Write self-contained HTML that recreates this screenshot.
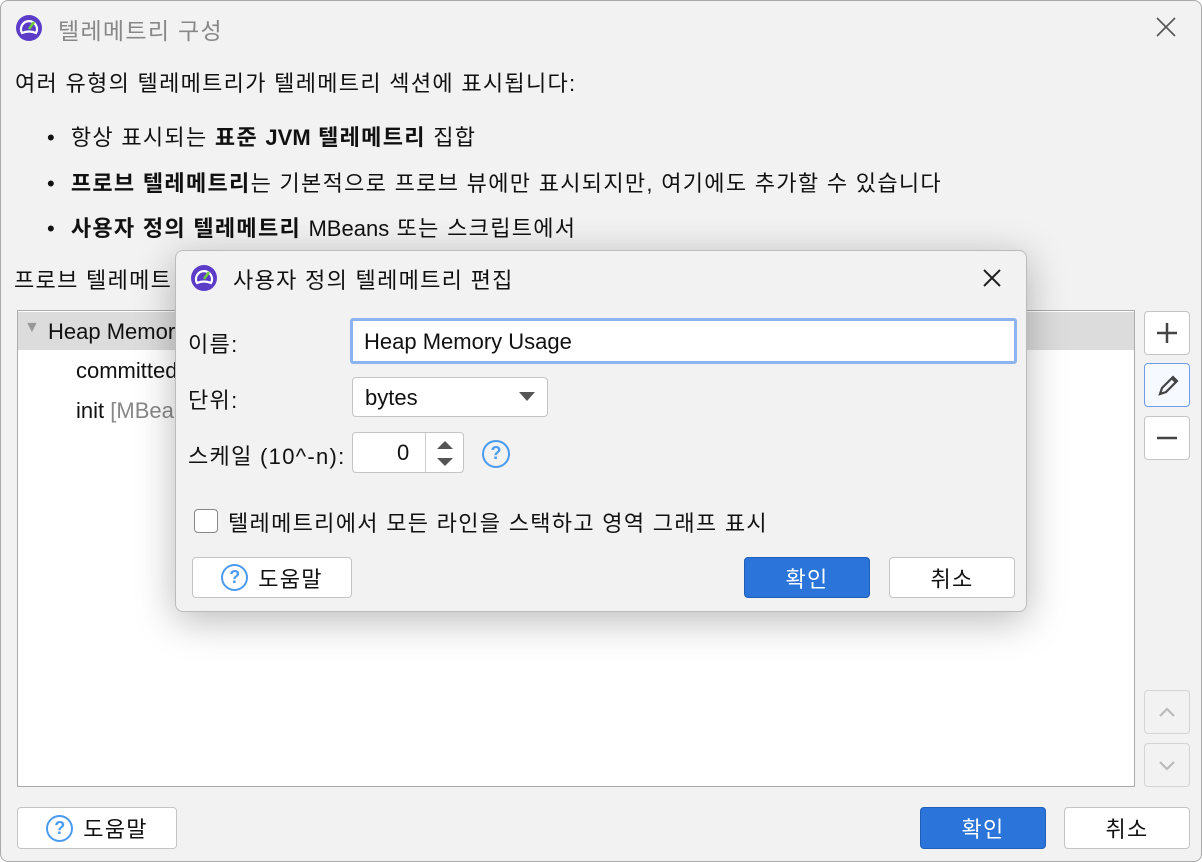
<!DOCTYPE html>
<html><head><meta charset="utf-8"><style>
*{box-sizing:border-box;margin:0;padding:0}
body{width:1202px;height:862px;background:#fff;font-family:"Liberation Sans","Noto Sans CJK KR",sans-serif;font-size:22px;color:#111;position:relative;overflow:hidden}
.win{position:absolute;left:0;top:0;width:1202px;height:862px;background:#f2f2f2;border:1px solid #aaa;border-radius:8px}
.a{position:absolute;white-space:nowrap}
.k{letter-spacing:1.3px}
.btn{position:absolute;background:#fff;border:1px solid #c4c4c4;border-radius:4px;display:flex;align-items:center;justify-content:center;font-size:22px;letter-spacing:1.3px}
.ok{background:#2b74d9;border-color:#1f5fb8;color:#fff}
.q{display:inline-block;width:27px;height:27px;border:2.5px solid #4b9bf0;border-radius:50%;color:#4b9bf0;font-size:18px;font-weight:bold;text-align:center;line-height:22px;margin-right:10px;letter-spacing:0}
.side{position:absolute;left:1143px;width:46px;height:44px;background:#fff;border:1px solid #c4c4c4;border-radius:4px}
.dlg{position:absolute;left:175px;top:250px;width:852px;height:362px;background:#f2f2f2;border:1px solid #bbb;border-radius:8px;box-shadow:0 8px 40px rgba(0,0,0,.28)}
</style></head><body>
<div class="win">
<svg class="a" style="left:14px;top:13px" width="28" height="28" viewBox="0 0 28 28"><circle cx="14" cy="14" r="13" fill="#5a3cc8"/><path d="M7 19 A8 8 0 1 1 21 19 Q14 16 7 19Z" fill="none" stroke="#fff" stroke-width="2.2"/><path d="M14 15 L19 8" stroke="#6fcf3a" stroke-width="2.5"/></svg>
<div class="a k" style="left:57px;top:11px;color:#888;font-size:23px">텔레메트리 구성</div>
<svg class="a" style="left:1154px;top:15px" width="22" height="22"><path d="M2 2L20 20M20 2L2 20" stroke="#555" stroke-width="1.6"/></svg>
<div class="a k" style="left:14px;top:65px">여러 유형의 텔레메트리가 텔레메트리 섹션에 표시됩니다:</div>
<div class="a k" style="left:46px;top:119px">•&nbsp;&nbsp;항상 표시되는 <b>표준 <span style="letter-spacing:0">JVM</span> 텔레메트리</b> 집합</div>
<div class="a k" style="left:46px;top:165px">•&nbsp;&nbsp;<b>프로브 텔레메트리</b>는 기본적으로 프로브 뷰에만 표시되지만, 여기에도 추가할 수 있습니다</div>
<div class="a k" style="left:46px;top:210px">•&nbsp;&nbsp;<b>사용자 정의 텔레메트리</b> <span style="letter-spacing:0">MBeans</span> 또는 스크립트에서</div>
<div class="a k" style="left:13px;top:262px">프로브 텔레메트</div>
<div class="a" style="left:16px;top:309px;width:1118px;height:477px;background:#fff;border:1px solid #aaa">
 <div class="a" style="left:0;top:1px;width:1116px;height:38px;background:#dcdcdc"></div>
 <div class="a" style="left:6px;top:8px;color:#999;font-size:16px">▼</div>
 <div class="a" style="left:30px;top:8px">Heap Memory</div>
 <div class="a" style="left:58px;top:47px">committed</div>
 <div class="a" style="left:58px;top:87px">init <span style="color:#888">[MBeans]</span></div>
</div>
<div class="side" style="top:310px"><svg width="44" height="42"><path d="M22 11v20M12 21h20" stroke="#444" stroke-width="2.5"/></svg></div>
<div class="side" style="top:362px;border-color:#6c9de6;background:#f6f9ff"><svg width="44" height="42"><path d="M15 30l2-6 11-11 4 4-11 11z" fill="none" stroke="#444" stroke-width="2.2"/><path d="M26 15l4 4 2-2-4-4z" fill="#444"/></svg></div>
<div class="side" style="top:415px"><svg width="44" height="42"><path d="M12 21h20" stroke="#444" stroke-width="2.5"/></svg></div>
<div class="side" style="top:689px;background:#f2f2f2;border-color:#d4d4d4"><svg width="44" height="42"><path d="M15 25l7-7 7 7" fill="none" stroke="#bbb" stroke-width="2.2"/></svg></div>
<div class="side" style="top:742px;background:#f2f2f2;border-color:#d4d4d4"><svg width="44" height="42"><path d="M15 18l7 7 7-7" fill="none" stroke="#bbb" stroke-width="2.2"/></svg></div>
<div class="btn" style="left:16px;top:806px;width:160px;height:42px"><span class="q">?</span>도움말</div>
<div class="btn ok" style="left:919px;top:806px;width:126px;height:42px">확인</div>
<div class="btn" style="left:1063px;top:806px;width:126px;height:42px">취소</div>
</div>
<div class="dlg">
<svg class="a" style="left:14px;top:13px" width="28" height="28" viewBox="0 0 28 28"><circle cx="14" cy="14" r="13" fill="#5a3cc8"/><path d="M7 19 A8 8 0 1 1 21 19 Q14 16 7 19Z" fill="none" stroke="#fff" stroke-width="2.2"/><path d="M14 15 L19 8" stroke="#6fcf3a" stroke-width="2.5"/></svg>
<div class="a k" style="left:57px;top:12px">사용자 정의 텔레메트리 편집</div>
<svg class="a" style="left:806px;top:17px" width="20" height="20"><path d="M2 2L18 18M18 2L2 18" stroke="#222" stroke-width="2"/></svg>
<div class="a k" style="left:12px;top:76px">이름:</div>
<div class="a" style="left:174px;top:67px;width:667px;height:46px;background:#fff;border:3px solid #8db4f0;border-radius:3px;padding:8px 0 0 11px">Heap Memory Usage</div>
<div class="a k" style="left:12px;top:132px">단위:</div>
<div class="a" style="left:176px;top:126px;width:196px;height:40px;background:#fff;border:1px solid #c4c4c4;border-radius:4px;padding:7px 0 0 12px">bytes<span style="position:absolute;right:12px;top:14px;width:0;height:0;border-left:8px solid transparent;border-right:8px solid transparent;border-top:9px solid #555"></span></div>
<div class="a k" style="left:12px;top:188px">스케일 (10^-n):</div>
<div class="a" style="left:176px;top:181px;width:112px;height:41px;background:#fff;border:1px solid #c4c4c4;border-radius:4px"><span class="a" style="left:44px;top:7px">0</span><span class="a" style="left:72px;top:0;width:1px;height:39px;background:#ccc"></span><svg class="a" style="left:73px;top:0" width="38" height="40"><path d="M11 16l8-8 8 8zM11 25l8 8 8-8z" fill="#555"/></svg></div>
<div class="a" style="left:306px;top:188px"><span class="q" style="width:28px;height:28px;line-height:23px">?</span></div>
<div class="a" style="left:18px;top:258px;width:24px;height:24px;background:#fff;border:1.5px solid #888;border-radius:4px"></div>
<div class="a k" style="left:52px;top:255px">텔레메트리에서 모든 라인을 스택하고 영역 그래프 표시</div>
<div class="btn" style="left:16px;top:306px;width:160px;height:41px"><span class="q">?</span>도움말</div>
<div class="btn ok" style="left:568px;top:306px;width:126px;height:41px">확인</div>
<div class="btn" style="left:713px;top:306px;width:126px;height:41px">취소</div>
</div>
</body></html>
